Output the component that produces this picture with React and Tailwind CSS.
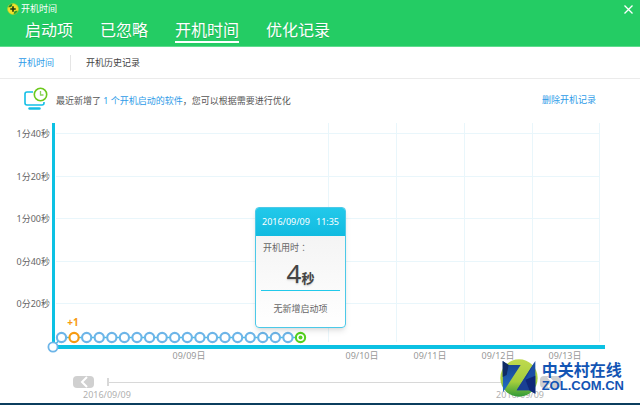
import { useState } from "react";

const TABS = ["启动项", "已忽略", "开机时间", "优化记录"];

const Y_TICKS = [
  { y: 15, label: "1分40秒" },
  { y: 58, label: "1分20秒" },
  { y: 100, label: "1分00秒" },
  { y: 143, label: "0分40秒" },
  { y: 185, label: "0分20秒" },
];

const X_LABELS = [
  { x: 189, label: "09/09日" },
  { x: 362, label: "09/10日" },
  { x: 430, label: "09/11日" },
  { x: 498, label: "09/12日" },
  { x: 565, label: "09/13日" },
];

const X_GRID = [328, 396, 464, 532, 599];

const POINTS = Array.from({ length: 20 }, (_, i) => ({
  x: 61.5 + i * 12.58,
  type: i === 1 ? "added" : i === 19 ? "current" : "normal",
}));

function getPointColor(type) {
  switch (type) {
    case "added":
      return "#f79a10";
    case "current":
      return "#55d11f";
    default:
      return "#6db5e8";
  }
}

function AppLogo() {
  return (
    <svg viewBox="0 0 22 22" className="w-3 h-3" aria-hidden="true">
      <circle cx="11" cy="11" r="10" fill="#f2e02b" />
      <path d="M2 8a10 10 0 0 1 8-7l-1 5-3 2z" fill="#1d8a2c" />
      <path d="M20 14a10 10 0 0 1-8 7l1-5 3-2z" fill="#2f9e2a" />
      <path d="M11 6v10M6 11h10" stroke="#1e3a12" strokeWidth="3" />
      <circle cx="11" cy="11" r="10" fill="none" stroke="#b9d62a" strokeWidth="1" />
    </svg>
  );
}

function BootIcon() {
  return (
    <svg viewBox="0 0 24 24" className="w-6 h-6" fill="none" aria-hidden="true">
      <path
        d="M9 5H3a2 2 0 0 0-2 2v9a2 2 0 0 0 2 2h15a2 2 0 0 0 2-2v-1"
        stroke="#12bfe6"
        strokeWidth="1.6"
      />
      <path d="M5.500 21.500h10" stroke="#12bfe6" strokeWidth="2.400" strokeLinecap="round" />
      <circle cx="16.500" cy="7.500" r="6.200" stroke="#6cc91c" strokeWidth="1.600" />
      <path d="M16.500 4v4h3" stroke="#8bd15a" strokeWidth="1.300" />
    </svg>
  );
}

function BootChart() {
  return (
    <svg
      viewBox="0 0 640 245"
      className="block w-full text-[9px]"
      role="img"
      aria-label="开机时间"
    >
      <g stroke="#e9f6fb" strokeWidth="1">
        {Y_TICKS.map((t) => (
          <line key={t.y} x1="56" x2="600" y1={t.y + 0.5} y2={t.y + 0.5} />
        ))}
        {X_GRID.map((x) => (
          <line key={x} x1={x + 0.5} x2={x + 0.5} y1="5" y2="224" />
        ))}
      </g>

      <g fill="#666666" textAnchor="end">
        {Y_TICKS.map((t) => (
          <text key={t.y} x="50" y={t.y + 4}>
            {t.label}
          </text>
        ))}
      </g>
      <g fill="#999999" textAnchor="middle">
        {X_LABELS.map((l) => (
          <text key={l.x} x={l.x} y="241">
            {l.label}
          </text>
        ))}
      </g>

      <rect x="52" y="5" width="3" height="224" fill="#0cc1e3" />
      <rect x="53" y="227" width="552" height="4" fill="#0cc1e3" />

      <path d="M53 229L61.500 219.500H300" fill="none" stroke="#3fc0e6" strokeWidth="1.500" />
      <circle cx="53" cy="229" r="4.600" fill="#ffffff" stroke="#6db5e8" strokeWidth="1.800" />
      {POINTS.map((p) => (
        <circle
          key={p.x}
          cx={p.x}
          cy="219.500"
          r="4.600"
          fill="#ffffff"
          stroke={getPointColor(p.type)}
          strokeWidth="2.100"
        />
      ))}
      <circle cx="300.500" cy="219.500" r="2" fill="#55d11f" />
      <text x="73" y="208" fill="#f79a10" fontSize="10" fontWeight="bold" textAnchor="middle">
        +1
      </text>
    </svg>
  );
}

function PointTooltip() {
  return (
    <div className="absolute left-[255px] top-[89px] w-[91px] rounded-sm border border-[#4cc9e8] bg-linear-to-b from-[#f1f1f1] to-white shadow-md overflow-hidden">
      <div className="h-7 flex items-center justify-between px-1.5 bg-linear-to-b from-[#22c9ea] to-[#10bbe0] text-white">
        <span>2016/09/09</span>
        <span>11:35</span>
      </div>
      <div className="px-[5px] text-[#666666]">
        <div className="h-6 flex items-center pl-0.5">
          开机用时
          <span className="font-['Noto_Sans_CJK_TC',sans-serif]" lang="zh-TW">
            ：
          </span>
        </div>
        <div className="h-[30px] flex items-center justify-center text-[#444444] text-shadow-sm">
          <div className="flex items-baseline">
            <span className="text-[26px] leading-6">4</span>
            <span className="text-[13px] leading-6 font-bold">秒</span>
          </div>
        </div>
        <div className="h-px bg-[#22c9ea]" />
        <div className="h-9 flex items-center justify-center">无新增启动项</div>
      </div>
    </div>
  );
}

function PageButton({ label, direction }) {
  return (
    <button
      aria-label={label}
      className="w-[21px] h-3 rounded-sm bg-[#d0d0d0] flex items-center justify-center cursor-pointer"
    >
      <svg viewBox="0 0 10 12" className="h-3 w-2.5" fill="none" stroke="#ffffff" strokeWidth="2">
        <path d={direction === "left" ? "M8 1L3 6l5 5" : "M2 1l5 5-5 5"} />
      </svg>
    </button>
  );
}

function ZolLogo() {
  return (
    <div className="absolute right-4 bottom-2 flex items-center gap-1 text-[#1355b4] font-bold">
      <svg viewBox="0 0 114 114" className="w-[38px] h-[38px]" aria-hidden="true">
        <defs>
          <linearGradient id="zolGreen" x1="0" y1="0" x2="0" y2="1">
            <stop offset="0" stopColor="#bfd94e" />
            <stop offset="0.6" stopColor="#a4cd3c" />
            <stop offset="1" stopColor="#2f9a38" />
          </linearGradient>
          <linearGradient id="zolBlue" x1="0" y1="0" x2="0" y2="1">
            <stop offset="0" stopColor="#153f8c" />
            <stop offset="1" stopColor="#2471c6" />
          </linearGradient>
        </defs>
        <circle cx="57" cy="57" r="56" fill="url(#zolGreen)" />
        <path d="M8 6l18 12h36L9 100z" fill="url(#zolBlue)" />
        <path d="M8 6l18 12-6 30L8 54z" fill="#0f2c66" />
        <path d="M106 6v98L88 94H50z" fill="#1c4fa4" />
        <path d="M106 6L76 62l12 32H50z" fill="#1a3f94" />
        <path d="M106 104L88 94 76 62l30-12z" fill="#0f2878" />
      </svg>
      <div>
        <div className="text-[16px] leading-4">中关村在线</div>
        <div className="font-['Liberation_Sans',sans-serif] text-[13px] leading-4">
          ZOL.COM.CN
        </div>
      </div>
    </div>
  );
}

function App() {
  const [activeTab, setActiveTab] = useState("开机时间");

  return (
    <div className="relative w-full bg-white font-['Noto_Sans','Noto_Sans_CJK_SC',sans-serif] text-[9px] leading-3 select-none">
      <header className="bg-[#24cc64] border-b border-[#5fdc8e] text-white">
        <div className="h-[18px] flex items-center justify-between pl-[7px] pr-1.5">
          <div className="flex items-center gap-0.5">
            <AppLogo />
            <span>开机时间</span>
          </div>
          <button aria-label="关闭" className="w-3 h-3 flex items-center justify-center cursor-pointer">
            <svg viewBox="0 0 9 9" className="w-[9px] h-[9px]" stroke="#ffffff" strokeWidth="1.300">
              <path d="M0.500 0.500l8 8M8.500 0.500l-8 8" />
            </svg>
          </button>
        </div>
        <nav className="h-7 flex items-start gap-[27px] pl-[25px]">
          {TABS.map((tab) => (
            <button
              key={tab}
              onClick={() => setActiveTab(tab)}
              className={`h-[25px] text-[16px] leading-6 border-b-2 cursor-pointer text-shadow-2xs ${
                tab === activeTab ? "border-white" : "border-transparent"
              }`}
            >
              {tab}
            </button>
          ))}
        </nav>
      </header>

      <nav className="h-8 flex items-center pl-[18px] border-b border-[#ebebeb]">
        <a href="#time" className="text-[#2d9be8] pr-4">
          开机时间
        </a>
        <a href="#history" className="text-[#444444] border-l border-[#e5e5e5] pl-[15px] py-0.5">
          开机历史记录
        </a>
      </nav>

      <div className="h-[39px] flex items-center gap-2 pl-6 pr-11">
        <BootIcon />
        <p className="flex-1 pt-1 text-[#555555]">
          最近新增了
          <a href="#new" className="text-[#2d9be8]">
            {" 1 个开机启动的软件"}
          </a>
          ，您可以根据需要进行优化
        </p>
        <a href="#clear" className="text-[#2d9be8] pt-0.5">
          删除开机记录
        </a>
      </div>

      <div className="relative">
        <BootChart />
        <PointTooltip />
      </div>

      <div className="pt-[13px] pl-[73px] pr-[79px] text-[#b0b0b0]">
        <div className="flex items-center gap-[13px]">
          <PageButton label="上一页" direction="left" />
          <div className="flex-1 flex items-center">
            <span className="w-0.5 h-2 bg-[#d8d8d8]" />
            <span className="flex-1 h-px bg-[#d8d8d8]" />
            <span className="w-0.5 h-2 bg-[#d8d8d8]" />
          </div>
          <PageButton label="下一页" direction="right" />
        </div>
        <div className="flex justify-between pl-2.5 pr-[17px] pt-px pb-0.5">
          <span>2016/09/09</span>
          <span>2016/09/09</span>
        </div>
      </div>
      <div className="h-0.5 bg-[#0b3d5e]" />

      <ZolLogo />
    </div>
  );
}

export default App;
